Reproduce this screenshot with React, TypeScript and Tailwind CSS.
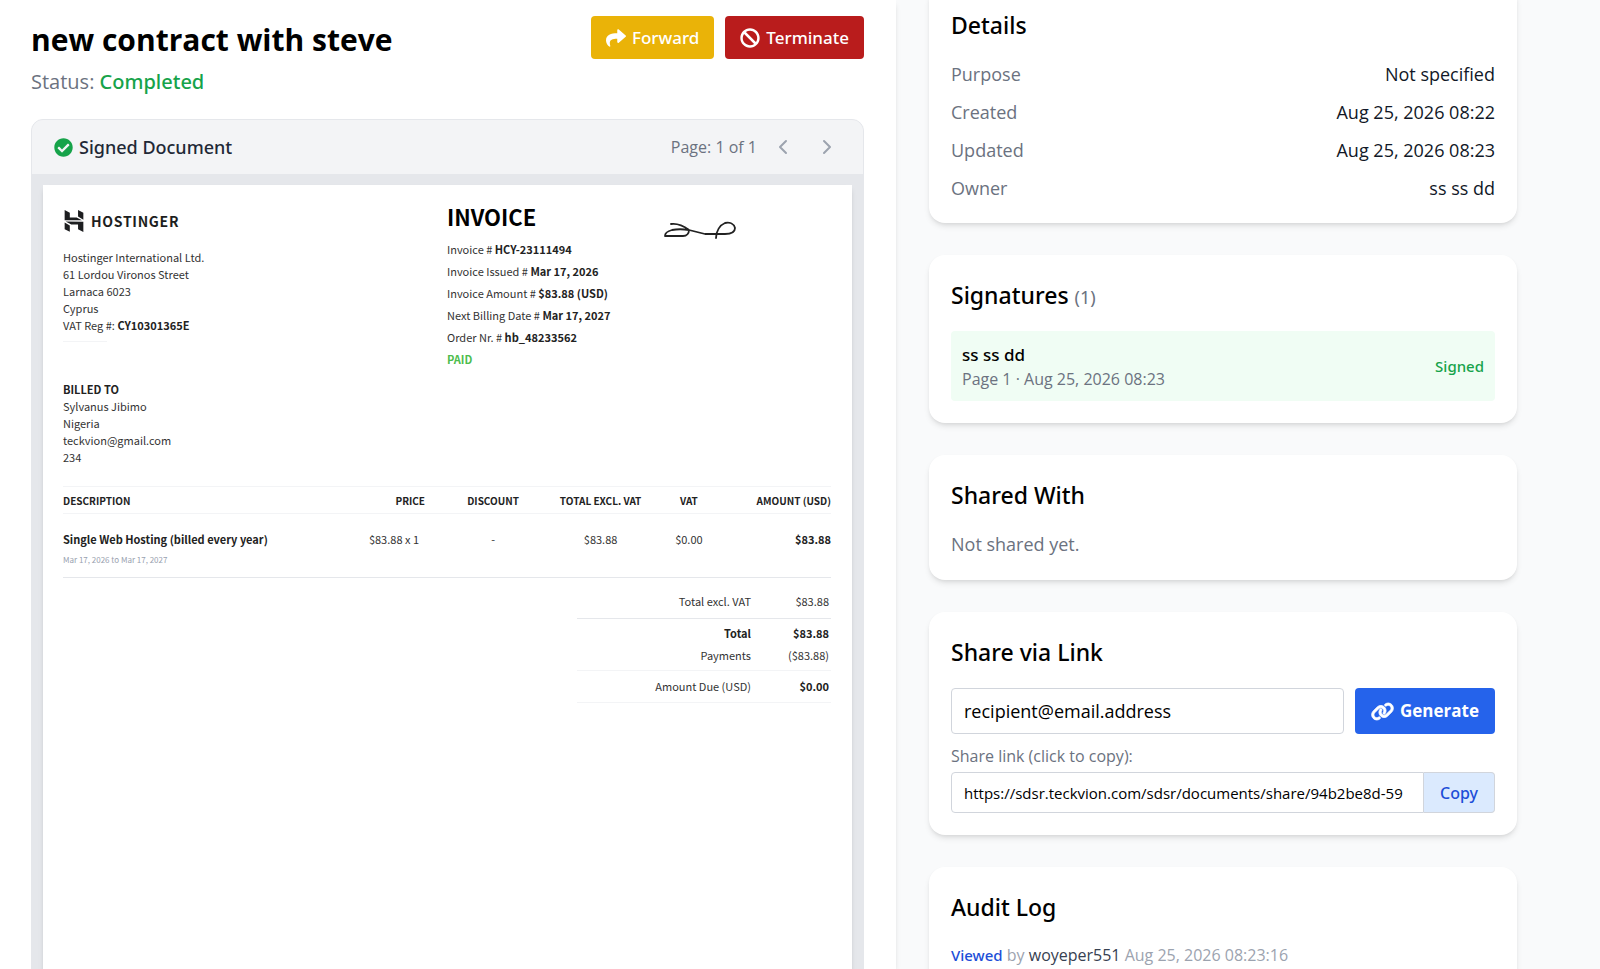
import React, { useState } from "react";
import { FaShare, FaBan, FaCheckCircle } from "react-icons/fa";
import { FaLink } from "react-icons/fa6";
import { ChevronLeft, ChevronRight } from "lucide-react";

const details = [
  { label: "Purpose", value: "Not specified" },
  { label: "Created", value: "Aug 25, 2026 08:22" },
  { label: "Updated", value: "Aug 25, 2026 08:23" },
  { label: "Owner", value: "ss ss dd" },
];

const invoiceMeta = [
  { label: "Invoice #", value: "HCY-23111494" },
  { label: "Invoice Issued #", value: "Mar 17, 2026" },
  { label: "Invoice Amount #", value: "$83.88 (USD)" },
  { label: "Next Billing Date #", value: "Mar 17, 2027" },
  { label: "Order Nr. #", value: "hb_48233562" },
];

const Card = ({ title, children }) => (
  <section className="bg-white rounded-2xl shadow-md p-[22px]">
    <h2 className="font-['Noto_Sans'] text-[23px] leading-9 font-medium mb-[18px]">{title}</h2>
    {children}
  </section>
);

const HostingerLogo = () => (
  <div className="flex items-center gap-1.5 h-[22px] text-[#1d1e20]">
    <svg className="w-[22px] h-[22px]" viewBox="1 0 22 24" fill="currentColor">
      <path d="M16.415 0v7.16l5.785 3.384V2.949L16.415 0ZM1.8 0v11.237h18.815L14.89 8.09l-7.457-.003V3.024L1.8 0Zm14.615 20.894v-5.019l-7.514-.005c.007.033-5.82-3.197-5.82-3.197l19.119.091V24l-5.785-3.106ZM1.8 13.551v7.343l5.633 2.949v-6.988L1.8 13.551Z" />
    </svg>
    <span className="text-sm font-bold tracking-wider">HOSTINGER</span>
  </div>
);

// The signed PDF page
const Invoice = () => (
  <div
    className="bg-white shadow-md min-h-[1144px] pl-5 pr-[21px] pt-[25px] text-[11px] leading-[17px] text-[#333]"
    style={{ fontFamily: '"Noto Sans CJK SC", sans-serif' }}
  >
    <div className="flex">
      <div className="w-1/2">
        <HostingerLogo />
        <address className="not-italic mt-[17px]">
          Hostinger International Ltd.
          <br />
          61 Lordou Vironos Street
          <br />
          Larnaca 6023
          <br />
          Cyprus
          <br />
          VAT Reg #: <b className="text-[#222]">CY10301365E</b>
        </address>
        <hr className="w-11 mt-[7px] border-gray-100" />
        <address className="not-italic mt-[39px]">
          <b className="text-[#222]">BILLED TO</b>
          <br />
          Sylvanus Jibimo
          <br />
          Nigeria
          <br />
          teckvion@gmail.com
          <br />
          234
        </address>
      </div>

      <div className="w-1/2 flex">
        <div className="w-[216px]">
          <h2 className="text-[22px] leading-3 font-bold text-black mb-4">INVOICE</h2>
          {invoiceMeta.map((item) => (
            <p key={item.label} className="leading-[22px]">
              {item.label} <b className="text-[#222]">{item.value}</b>
            </p>
          ))}
          <p className="leading-[22px] font-bold text-[#4dbd4d]">PAID</p>
        </div>
        <svg
          className="w-[74px] h-5 mt-[11px]"
          viewBox="0 0 74 20"
          fill="none"
          stroke="#222"
          strokeWidth="1.8"
          strokeLinecap="round"
          strokeLinejoin="round"
        >
          <path d="M8 3 C15 2 22 6 26 9 C26 12 24 15 20 15 H2 C2 12 5 10 9 9 C14 8 20 8 26 9 L38 12 L42 13 H62 C68 13 72 12 72 7 C71 3 67 1 62 2 C57 4 53 10 53 17" />
        </svg>
      </div>
    </div>

    <table className="w-full mt-5 table-fixed">
      <thead>
        <tr className="border-y border-gray-100 text-[10px] h-[27px] text-[#222]">
          <th className="w-[38%] text-left">DESCRIPTION</th>
          <th className="w-[12%] text-right pr-[22px]">PRICE</th>
          <th className="w-[12%]">DISCOUNT</th>
          <th className="w-[16%]">TOTAL EXCL. VAT</th>
          <th className="w-[7%]">VAT</th>
          <th className="w-[15%] text-right">AMOUNT (USD)</th>
        </tr>
      </thead>
      <tbody>
        <tr className="border-b border-gray-200 h-16 align-top text-center">
          <td className="text-left pt-[17px]">
            <b className="text-[#222]">Single Web Hosting (billed every year)</b>
            <p className="text-[8px] leading-6 text-gray-400">Mar 17, 2026 to Mar 17, 2027</p>
          </td>
          <td className="pt-[17px] text-right pr-7">$83.88 x 1</td>
          <td className="pt-[17px]">-</td>
          <td className="pt-[17px]">$83.88</td>
          <td className="pt-[17px]">$0.00</td>
          <td className="pt-[17px] text-right font-bold text-[#222]">$83.88</td>
        </tr>
      </tbody>
    </table>

    <table className="w-[254px] ml-auto mt-2 text-right">
      <tbody>
        <tr className="border-b border-gray-200 h-8">
          <td>Total excl. VAT</td>
          <td className="w-20 pr-0.5">$83.88</td>
        </tr>
        <tr className="h-6 font-bold align-bottom text-[#222]">
          <td>Total</td>
          <td className="pr-0.5">$83.88</td>
        </tr>
        <tr className="border-b border-gray-100 h-7">
          <td>Payments</td>
          <td className="pr-0.5">($83.88)</td>
        </tr>
        <tr className="border-b border-gray-100 h-8">
          <td>Amount Due (USD)</td>
          <td className="pr-0.5 font-bold text-[#222]">$0.00</td>
        </tr>
      </tbody>
    </table>
  </div>
);

const App = () => {
  const [email, setEmail] = useState("recipient@email.address");
  const shareLink = "https://sdsr.teckvion.com/sdsr/documents/share/94b2be8d-59";

  const handleCopy = () => {
    navigator.clipboard.writeText(shareLink);
  };

  return (
    <div
      className="flex h-screen overflow-hidden bg-gray-50 text-black"
      style={{ fontFamily: '"Open Sans", "Noto Sans", sans-serif' }}
    >
      {/* Document */}
      <main className="w-[56%] bg-white shadow-md pl-[31px] pr-8 pt-4">
        <div className="flex justify-between items-start">
          <div>
            <h1 className="text-[30px] leading-[48px] font-bold">new contract with steve</h1>
            <p className="text-xl leading-9 text-[#6b7280]">
              Status: <span className="font-['Noto_Sans'] font-medium text-[#16a34a]">Completed</span>
            </p>
          </div>
          <div className="flex gap-[11px] font-['Noto_Sans'] text-[17px] font-medium text-white">
            <button className="flex items-center gap-1.5 h-[43px] px-[15px] rounded bg-[#eab308]">
              <FaShare className="w-5 h-5" />
              Forward
            </button>
            <button className="flex items-center gap-1.5 h-[43px] px-[15px] rounded bg-[#b91c1c]">
              <FaBan className="w-5 h-5" />
              Terminate
            </button>
          </div>
        </div>

        <div className="mt-[19px] border border-gray-200 rounded-xl overflow-hidden bg-gray-200">
          <div className="flex items-center justify-between h-[55px] bg-gray-100 border-b border-gray-200 pl-[22px] pr-6">
            <div className="flex items-center gap-1.5 font-['Noto_Sans'] text-lg font-medium text-[#1f2937]">
              <FaCheckCircle className="w-[19px] h-[19px] text-[#16a34a]" />
              Signed Document
            </div>
            <div className="flex items-center text-[#6b7280]">
              <span>Page: 1 of 1</span>
              <button aria-label="Previous page" className="ml-3.5 text-[#9ca3af]">
                <ChevronLeft className="w-6 h-6" />
              </button>
              <button aria-label="Next page" className="ml-5 text-[#9ca3af]">
                <ChevronRight className="w-6 h-6" />
              </button>
            </div>
          </div>
          <div className="px-[11px] pt-2.5 pb-[11px]">
            <Invoice />
          </div>
        </div>
      </main>

      {/* Sidebar */}
      <aside className="flex-1 min-w-0 flex flex-col gap-8 pl-[33px] pr-[83px] -mt-[15px]">
        <Card title="Details">
          <dl className="flex flex-col gap-3 text-lg">
            {details.map((item) => (
              <div key={item.label} className="flex justify-between leading-[26px]">
                <dt className="text-[#6b7280]">{item.label}</dt>
                <dd className="text-[#111827]">{item.value}</dd>
              </div>
            ))}
          </dl>
        </Card>

        <Card
          title={
            <>
              Signatures <span className="text-lg font-normal text-[#6b7280]">(1)</span>
            </>
          }
        >
          <div className="flex items-center justify-between bg-green-50 rounded p-[11px]">
            <div>
              <p className="font-['Noto_Sans'] text-[17px] leading-[26px] font-medium">ss ss dd</p>
              <p className="text-base leading-[22px] text-[#6b7280]">Page 1 · Aug 25, 2026 08:23</p>
            </div>
            <span className="font-['Noto_Sans'] text-[15px] font-medium text-[#16a34a]">Signed</span>
          </div>
        </Card>

        <Card title="Shared With">
          <p className="text-lg leading-[27px] text-[#6b7280]">Not shared yet.</p>
        </Card>

        <Card title="Share via Link">
          <div className="flex gap-[11px]">
            <input
              type="email"
              aria-label="Recipient email"
              value={email}
              onChange={(e) => setEmail(e.target.value)}
              className="flex-1 min-w-0 h-[46px] px-3 border border-gray-300 rounded text-lg"
            />
            <button className="flex items-center gap-1.5 h-[46px] px-4 rounded bg-[#2563eb] text-white text-[17px] font-bold">
              <FaLink className="w-[23px] h-[19px]" strokeWidth={24} />
              Generate
            </button>
          </div>
          <label htmlFor="share-link" className="block mt-[11px] mb-1 text-base leading-[23px] text-[#6b7280]">
            Share link (click to copy):
          </label>
          <div className="flex">
            <input
              id="share-link"
              type="text"
              readOnly
              value={shareLink}
              onClick={handleCopy}
              className="flex-1 min-w-0 h-[41px] px-3 border border-gray-300 rounded-l text-[15px]"
            />
            <button
              onClick={handleCopy}
              className="px-4 border border-l-0 border-gray-300 rounded-r bg-[#dbeafe] font-['Noto_Sans'] text-base font-medium text-[#1d4ed8]"
            >
              Copy
            </button>
          </div>
        </Card>

        <Card title="Audit Log">
          <p className="text-base leading-6 text-[#9ca3af]">
            <span className="font-['Noto_Sans'] text-[15px] font-medium text-[#1d4ed8]">Viewed</span> by{" "}
            <span className="text-[#374151]">woyeper551</span> Aug 25, 2026 08:23:16
          </p>
        </Card>
      </aside>
    </div>
  );
};

export default App;
